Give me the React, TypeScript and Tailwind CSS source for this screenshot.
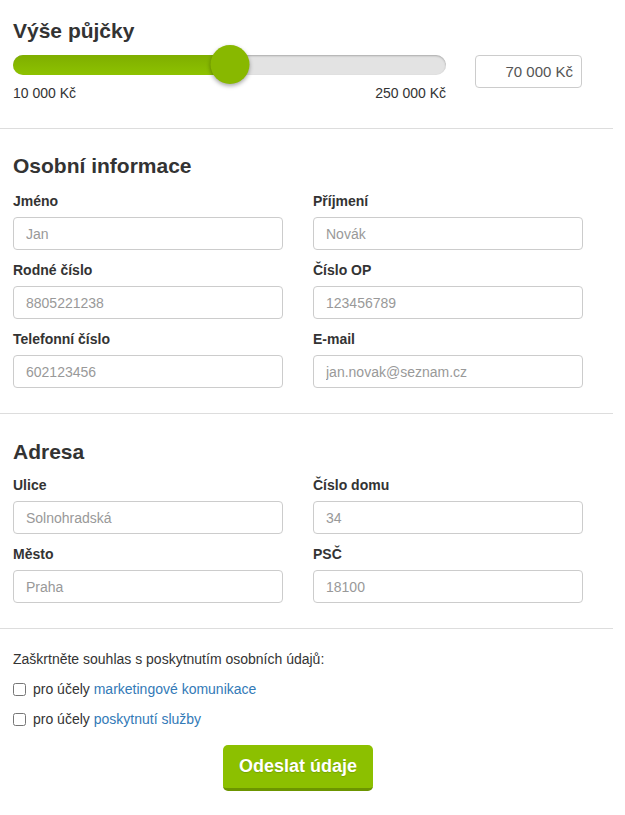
import React from 'react';

const Field: React.FC<{ label: string; placeholder: string }> = ({ label, placeholder }) => (
  <div>
    <label className="block text-[14px] leading-4 font-bold text-[#333]">{label}</label>
    <input
      type="text"
      placeholder={placeholder}
      className="mt-2 block w-full h-[33px] rounded border border-[#ccc] px-3 text-[14px] text-[#333] placeholder:text-[#999] outline-none"
    />
  </div>
);

const Divider = () => <div className="h-px w-full bg-[#dddddd]" />;

export default function App() {
  const thumb = 217; // px from track start
  return (
    <div className="w-[613px] bg-white text-[#333]" style={{ fontFamily: '"Liberation Sans", Arial, sans-serif' }}>
      {/* loan amount */}
      <section className="pl-[13px] pr-[30px] pt-[19px] pb-[27px]">
        <h2 className="text-[21px] leading-6 font-bold">Výše půjčky</h2>
        <div className="mt-[2px] flex items-start">
          <div className="w-[433px]">
            <div className="relative h-10">
              <div className="absolute left-0 right-0 top-[10px] h-5 rounded-full bg-[#e3e3e3] shadow-[inset_0_1px_2px_rgba(0,0,0,0.25)]" />
              <div
                className="absolute left-0 top-[10px] h-5 rounded-l-full bg-gradient-to-b from-[#7fae00] to-[#8dc200]"
                style={{ width: thumb }}
              />
              <div
                className="absolute top-0 h-[39px] w-[39px] -translate-x-1/2 rounded-full bg-[#88b800] shadow-[0_2px_4px_rgba(0,0,0,0.35)]"
                style={{ left: thumb }}
              />
            </div>
            <div className="flex justify-between text-[14px] leading-4">
              <span>10 000 Kč</span>
              <span>250 000 Kč</span>
            </div>
          </div>
          <input
            type="text"
            defaultValue="70 000 Kč"
            className="ml-[29px] mt-[10px] h-[33px] w-[107px] rounded border border-[#ccc] px-2 text-right text-[15px] text-[#555] outline-none"
          />
        </div>
      </section>
      <Divider />

      {/* personal info */}
      <section className="pl-[13px] pr-[30px] pt-[25px] pb-[25px]">
        <h2 className="text-[21px] leading-6 font-bold">Osobní informace</h2>
        <div className="mt-[15px] grid grid-cols-2 gap-x-[30px] gap-y-[12px]">
          <Field label="Jméno" placeholder="Jan" />
          <Field label="Příjmení" placeholder="Novák" />
          <Field label="Rodné číslo" placeholder="8805221238" />
          <Field label="Číslo OP" placeholder="123456789" />
          <Field label="Telefonní číslo" placeholder="602123456" />
          <Field label="E-mail" placeholder="jan.novak@seznam.cz" />
        </div>
      </section>
      <Divider />

      {/* address */}
      <section className="pl-[13px] pr-[30px] pt-[26px] pb-[25px]">
        <h2 className="text-[21px] leading-6 font-bold">Adresa</h2>
        <div className="mt-[13px] grid grid-cols-2 gap-x-[30px] gap-y-[12px]">
          <Field label="Ulice" placeholder="Solnohradská" />
          <Field label="Číslo domu" placeholder="34" />
          <Field label="Město" placeholder="Praha" />
          <Field label="PSČ" placeholder="18100" />
        </div>
      </section>
      <Divider />

      {/* consent */}
      <section className="pl-[13px] pr-[30px] pt-[22px] pb-6">
        <p className="text-[14px] leading-4">Zaškrtněte souhlas s poskytnutím osobních údajů:</p>
        <div className="mt-[7px]">
          <label className="flex h-[30px] items-center text-[14px]">
            <input type="checkbox" className="mr-[7px] h-[13px] w-[13px]" />
            pro účely&nbsp;<a className="text-[#337ab7]">marketingové komunikace</a>
          </label>
          <label className="flex h-[30px] items-center text-[14px]">
            <input type="checkbox" className="mr-[7px] h-[13px] w-[13px]" />
            pro účely&nbsp;<a className="text-[#337ab7]">poskytnutí služby</a>
          </label>
        </div>
        <div className="mt-[11px] flex justify-center">
          <button
            type="button"
            className="h-[46px] w-[150px] rounded-[5px] border-b-[3px] border-[#6c9500] bg-[#8cc000] text-[18px] font-bold text-white [text-shadow:0_1px_1px_rgba(0,0,0,0.15)]"
          >
            Odeslat údaje
          </button>
        </div>
      </section>
    </div>
  );
}
